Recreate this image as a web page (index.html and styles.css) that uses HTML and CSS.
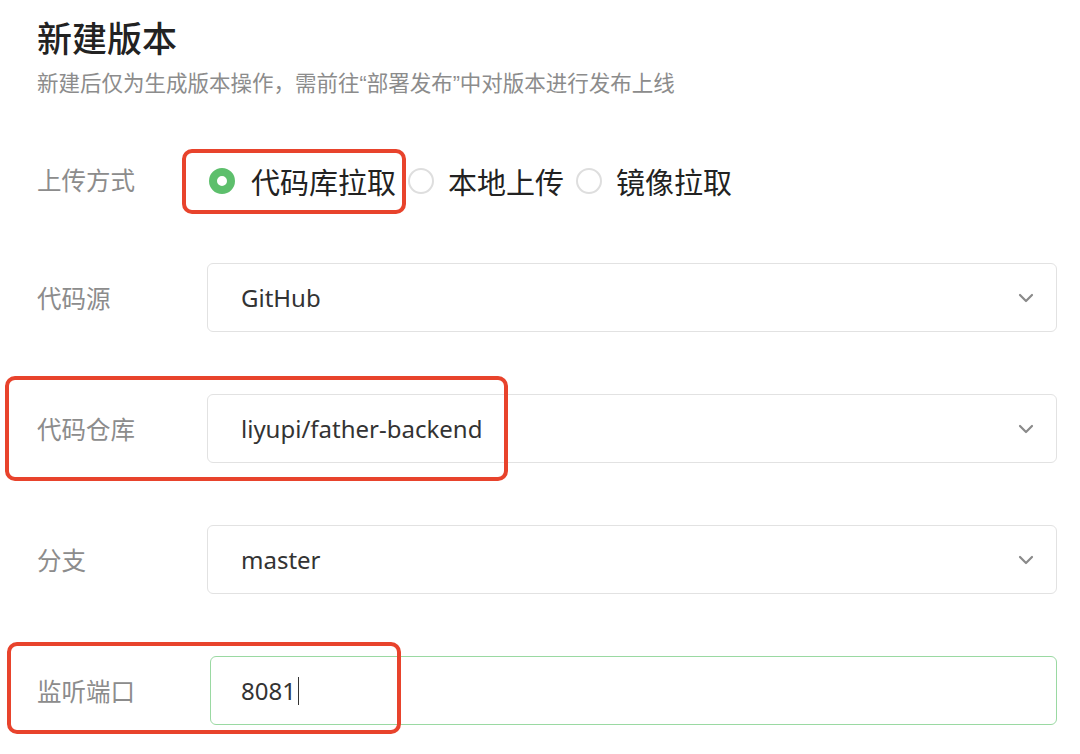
FILE: index.html
```html
<!doctype html>
<html>
<head>
  <meta charset="utf-8">
  <link rel="stylesheet" href="styles.css">
</head>
<body>
  <div class="page">
    <h1 class="title">新建版本</h1>
    <p class="sub">新建后仅为生成版本操作，需前往“部署发布”中对版本进行发布上线</p>

    <div class="form">
      <div class="row row-radio">
        <div class="label">上传方式</div>
        <div class="radios">
          <label class="radio checked"><span class="dot"></span>代码库拉取</label>
          <label class="radio"><span class="dot"></span>本地上传</label>
          <label class="radio"><span class="dot"></span>镜像拉取</label>
        </div>
      </div>

      <div class="row">
        <div class="label">代码源</div>
        <div class="select">
          <span class="value">GitHub</span>
          <svg class="arrow" width="16" height="10" viewBox="0 0 16 10"><path d="M2 2l6 6 6-6" fill="none" stroke="#8a8a8a" stroke-width="2.2" stroke-linecap="round" stroke-linejoin="round"/></svg>
        </div>
      </div>

      <div class="row">
        <div class="label">代码仓库</div>
        <div class="select">
          <span class="value">liyupi/father-backend</span>
          <svg class="arrow" width="16" height="10" viewBox="0 0 16 10"><path d="M2 2l6 6 6-6" fill="none" stroke="#8a8a8a" stroke-width="2.2" stroke-linecap="round" stroke-linejoin="round"/></svg>
        </div>
      </div>

      <div class="row">
        <div class="label">分支</div>
        <div class="select">
          <span class="value">master</span>
          <svg class="arrow" width="16" height="10" viewBox="0 0 16 10"><path d="M2 2l6 6 6-6" fill="none" stroke="#8a8a8a" stroke-width="2.2" stroke-linecap="round" stroke-linejoin="round"/></svg>
        </div>
      </div>

      <div class="row">
        <div class="label">监听端口</div>
        <div class="input">
          <span class="value">8081</span><span class="caret"></span>
        </div>
      </div>
    </div>

    <div class="mark mark-radio"></div>
    <div class="mark mark-repo"></div>
    <div class="mark mark-port"></div>
  </div>
</body>
</html>
```

FILE: styles.css
```css
html, body {
  margin: 0;
  background: #fff;
  font-family: "Liberation Sans", "Noto Sans CJK SC", sans-serif;
  color: #333;
}
.page {
  position: relative;
  width: 1080px;
  height: 754px;
  padding: 15px 0 0 37px;
  box-sizing: border-box;
  overflow: hidden;
}
.title {
  margin: 0;
  font-family: "Noto Sans CJK SC", sans-serif;
  font-size: 35px;
  line-height: 44px;
  font-weight: 500;
  color: #222;
}
.sub {
  margin: 11px 0 0;
  font-size: 21.5px;
  line-height: 28px;
  color: #8c8c8c;
}
.form {
  display: flex;
  flex-direction: column;
  gap: 62px;
  margin-top: 52px;
}
.row {
  display: flex;
  align-items: center;
  height: 69px;
}
.row-radio {
  height: 62px;
  margin-bottom: -11px;
}
.row-radio .label {
  margin-top: -4px;
}
.label {
  width: 170px;
  flex: none;
  font-size: 24.5px;
  color: #8c8c8c;
}
.radios {
  display: flex;
  align-items: center;
  margin-left: 2px;
}
.radio {
  display: flex;
  align-items: center;
  font-size: 29px;
  color: #222;
  margin-right: 12px;
}
.radio + .radio .dot {
  margin-right: 14px;
}
.dot {
  width: 26px;
  height: 26px;
  border-radius: 50%;
  border: 2px solid #dedede;
  box-sizing: border-box;
  margin-right: 16px;
  background: #fff;
}
.radio.checked .dot {
  border: 8px solid #5dbf6c;
  background: #fff;
}
.select, .input {
  flex: 1;
  display: flex;
  align-items: center;
  height: 69px;
  margin-right: 23px;
  border: 1px solid #e2e2e2;
  border-radius: 6px;
  box-sizing: border-box;
  padding: 0 22px 0 33px;
}
.value {
  font-family: "Noto Sans", "Noto Sans CJK SC", sans-serif;
  font-size: 24px;
  color: #333;
}
.arrow {
  margin-left: auto;
}
.input {
  margin-left: 3px;
  padding-left: 30px;
  border: 1.5px solid #9ad9a2;
}
.caret {
  width: 1px;
  height: 28px;
  margin-left: 2px;
  background: #333;
}
.mark {
  position: absolute;
  border: 4px solid #e8432c;
  border-radius: 10px;
  box-sizing: border-box;
}
.mark-radio {
  left: 182px;
  top: 149px;
  width: 224px;
  height: 65px;
}
.mark-repo {
  left: 5px;
  top: 376px;
  width: 503px;
  height: 105px;
}
.mark-port {
  left: 7px;
  top: 642px;
  width: 394px;
  height: 92px;
}
```
